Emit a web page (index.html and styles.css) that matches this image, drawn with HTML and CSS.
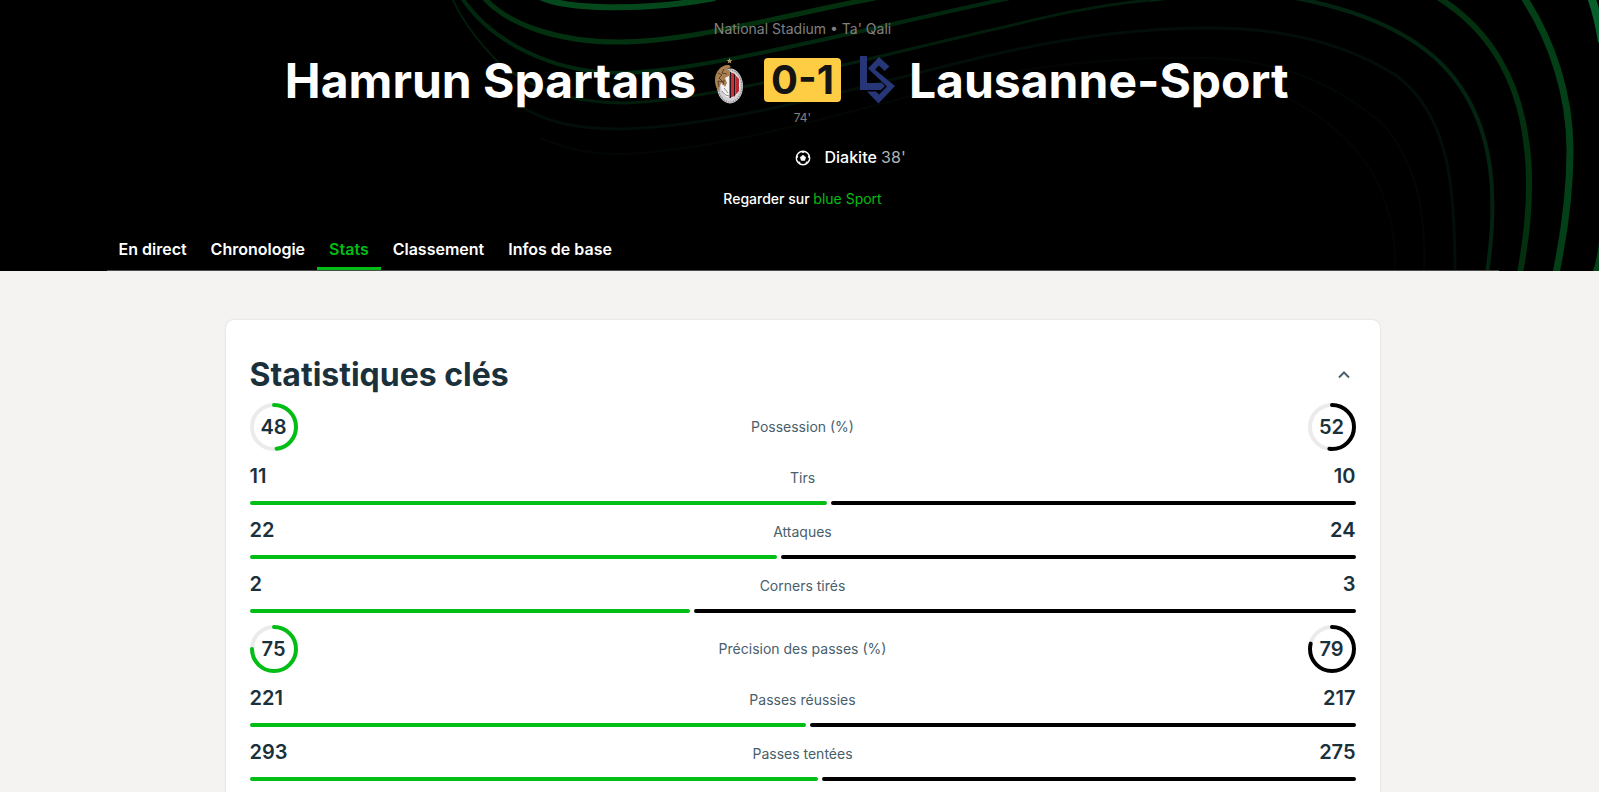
FILE: index.html
```html
<!DOCTYPE html>
<html lang="fr">

<head>
    <meta charset="UTF-8">
    <meta name="viewport" content="width=device-width, initial-scale=1.0">
    <title>Hamrun Spartans - Lausanne-Sport</title>
    <link rel="stylesheet" href="styles.css">
</head>

<body>
    <header class="match-header">
        <!-- Background waves -->
        <svg class="waves" viewBox="0 0 1599 271" preserveAspectRatio="xMidYMin slice" aria-hidden="true">
            <path d="M540 -3C565 9 640 12 715 -2" stroke="#04481c" stroke-width="6" />
            <path d="M484 -2C510 26 560 42 618 42C690 42 780 16 875 -2" stroke="#03310f" stroke-width="5" />
            <path d="M462 -2C490 40 550 73 621 73C700 72 860 30 1010 -2" stroke="#02270f" stroke-width="4" />
            <path d="M452 -2C462 20 478 42 500 64" stroke="#021c0b" stroke-width="2" />
            <path d="M500 64C540 94 580 103 625 103C720 100 900 50 1000 28C1050 16 1090 6 1150 0" stroke="#021d0c" stroke-width="3" />
            <path d="M1150 0C1200 -7 1260 -9 1300 -1C1370 13 1423 38 1454 78C1495 130 1498 200 1487 273" stroke="#032410" stroke-width="4" />
            <path d="M520 106C550 124 580 129 621 129C740 126 900 75 1000 53C1080 35 1150 28 1210 28C1290 28 1350 46 1397 76C1450 116 1455 190 1455 273" stroke="#020e07" stroke-width="3" />
            <path d="M540 138C570 150 590 154 621 154C740 150 900 95 1000 74C1080 60 1150 57 1210 58C1300 62 1350 96 1385 126C1420 170 1426 220 1424 273" stroke="#030704" stroke-width="2" />
            <path d="M1270 90C1350 125 1398 180 1395 273" stroke="#030403" stroke-width="2" />
            <path d="M1439 -2C1490 30 1518 80 1526 140C1532 180 1528 230 1520 273" stroke="#03300f" stroke-width="6" />
            <path d="M1523 -4C1552 40 1570 95 1570 150C1570 190 1565 230 1556 273" stroke="#033f17" stroke-width="7" />
            <path d="M1591 -3Q1598 16 1602 42" stroke="#07602c" stroke-width="8" />
            <path d="M1603 236Q1602 256 1596 273" stroke="#04421a" stroke-width="7" />
        </svg>

        <div class="wrapper">
            <p class="venue">National Stadium • Ta' Qali</p>

            <div class="teams">
                <div class="team home">
                    <span class="team-name">Hamrun Spartans</span>
                    <svg class="team-logo" viewBox="0 0 48 48" aria-hidden="true">
                        <path d="M25.500 2l.8 2h2.100l-1.700 1.300.6 2.100-1.800-1.200-1.800 1.200.6-2.100L22.600 4h2.100z" fill="#c39a68" />
                        <ellipse cx="26" cy="30" rx="13" ry="17.500" fill="#d2d2d5" />
                        <ellipse cx="26" cy="30" rx="11.800" ry="16" fill="none" stroke="#8c8c91" stroke-width="1.200" stroke-dasharray="1.500 1" />
                        <ellipse cx="26.500" cy="29" rx="9.500" ry="13" fill="#f4f4f4" />
                        <path d="M25.500 16h1.500v26h-1.500z" fill="#29171b" />
                        <path d="M27 16.500l3 .7v23l-3 1.300z" fill="#c9303a" />
                        <path d="M30 17.500l1.500 1.500v20l-1.500 2z" fill="#2a1216" />
                        <path d="M31.500 19l3.500 4v12l-3.500 4z" fill="#b92a33" />
                        <path d="M25 9c-7-1-14 6-14 15 0 6 2 10 5 11-1-4 0-7 2-8l3 4 2-4-2-5 4-2 1-5-3-2 4-2z" fill="#a98051" />
                        <path d="M14 17l4 2-3 3 4 4-5-1 1 6M20 13l-2 4 5 1M20 24l-1 5" stroke="#5b4026" stroke-width="1" fill="none" />
                        <path d="M18 35q3 5 7 5M20 32l4 5" stroke="#8c8c91" stroke-width="1" fill="none" />
                    </svg>
                </div>
                <div class="score">0-1</div>
                <div class="team away">
                    <svg class="team-logo" viewBox="0 0 48 48" aria-hidden="true">
                        <path d="M7 0h7v27h15l3 3-4 4H7z" fill="#263676" />
                        <path d="M26 1l10.500 9.500-5 4.500-5.500-5.500-4 4L42 30 25.500 47.500 14 35.500h9l3 3L34 30.500 15 12.500z" fill="#263676" />
                    </svg>
                    <span class="team-name">Lausanne-Sport</span>
                </div>
            </div>
            <p class="minute">74'</p>

            <div class="scorers">
                <svg class="goal-icon" viewBox="0 0 24 24" aria-hidden="true">
                    <circle cx="12" cy="12" r="6.700" fill="none" stroke="#fff" stroke-width="1.400" />
                    <path d="M12 9.200l2.700 2-1 3.200h-3.400l-1-3.200z" fill="#fff" stroke="#fff" stroke-width=".6" stroke-linejoin="round" />
                    <path d="M9.800 5.500h4.400L12 7.200zM18 8.600l.7 4-2-1.300zM6 8.600l-.7 4 2-1.300zM14.600 18l2.600-2.400-2.400.1zM9.400 18l-2.600-2.400 2.400.1z" fill="#fff" />
                </svg>
                <p class="scorer">Diakite <span class="goal-minute">38'</span></p>
            </div>

            <p class="watch">Regarder sur <a href="#">blue Sport</a></p>

            <nav class="tabs">
                <a href="#">En direct</a>
                <a href="#">Chronologie</a>
                <a href="#" class="active">Stats</a>
                <a href="#">Classement</a>
                <a href="#">Infos de base</a>
            </nav>
        </div>
    </header>

    <main class="wrapper">
        <section class="card">
            <div class="card-header">
                <h2>Statistiques clés</h2>
                <button type="button" class="toggle" aria-label="Réduire" aria-expanded="true">
                    <svg viewBox="0 0 24 24">
                        <path d="M7 14.500l5-5 5 5" />
                    </svg>
                </button>
            </div>

            <div class="stat">
                <div class="ring">
                    <svg viewBox="0 0 48 48">
                        <circle cx="24" cy="24" r="22" />
                        <circle class="value" cx="24" cy="24" r="22" pathLength="100" stroke-dasharray="48 100" />
                    </svg>
                    <span>48</span>
                </div>
                <span class="label">Possession (%)</span>
                <div class="ring away">
                    <svg viewBox="0 0 48 48">
                        <circle cx="24" cy="24" r="22" />
                        <circle class="value" cx="24" cy="24" r="22" pathLength="100" stroke-dasharray="52 100" />
                    </svg>
                    <span>52</span>
                </div>
            </div>

            <div class="stat bar-stat">
                <span class="number">11</span>
                <span class="label">Tirs</span>
                <span class="number away">10</span>
                <div class="bars">
                    <div class="bar" style="flex-grow: 11"></div>
                    <div class="bar away" style="flex-grow: 10"></div>
                </div>
            </div>

            <div class="stat bar-stat">
                <span class="number">22</span>
                <span class="label">Attaques</span>
                <span class="number away">24</span>
                <div class="bars">
                    <div class="bar" style="flex-grow: 22"></div>
                    <div class="bar away" style="flex-grow: 24"></div>
                </div>
            </div>

            <div class="stat bar-stat">
                <span class="number">2</span>
                <span class="label">Corners tirés</span>
                <span class="number away">3</span>
                <div class="bars">
                    <div class="bar" style="flex-grow: 2"></div>
                    <div class="bar away" style="flex-grow: 3"></div>
                </div>
            </div>

            <div class="stat">
                <div class="ring">
                    <svg viewBox="0 0 48 48">
                        <circle cx="24" cy="24" r="22" />
                        <circle class="value" cx="24" cy="24" r="22" pathLength="100" stroke-dasharray="75 100" />
                    </svg>
                    <span>75</span>
                </div>
                <span class="label">Précision des passes (%)</span>
                <div class="ring away">
                    <svg viewBox="0 0 48 48">
                        <circle cx="24" cy="24" r="22" />
                        <circle class="value" cx="24" cy="24" r="22" pathLength="100" stroke-dasharray="79 100" />
                    </svg>
                    <span>79</span>
                </div>
            </div>

            <div class="stat bar-stat">
                <span class="number">221</span>
                <span class="label">Passes réussies</span>
                <span class="number away">217</span>
                <div class="bars">
                    <div class="bar" style="flex-grow: 221"></div>
                    <div class="bar away" style="flex-grow: 217"></div>
                </div>
            </div>

            <div class="stat bar-stat">
                <span class="number">293</span>
                <span class="label">Passes tentées</span>
                <span class="number away">275</span>
                <div class="bars">
                    <div class="bar" style="flex-grow: 293"></div>
                    <div class="bar away" style="flex-grow: 275"></div>
                </div>
            </div>
        </section>
    </main>
</body>

</html>
```

FILE: styles.css
```css
* {
    box-sizing: border-box;
}

body {
    margin: 0;
    background-color: #f4f3f1;
    font-family: Inter, "Liberation Sans", sans-serif;
    color: #1a313c;
}

p,
h2 {
    margin: 0;
}

a {
    text-decoration: none;
}

.wrapper {
    padding-left: 6px;
}

/* Header */
.match-header {
    position: relative;
    overflow: hidden;
    background-color: #000;
    color: #fff;
    text-align: center;
}

.match-header .wrapper {
    position: relative;
    padding-top: 19px;
}

.waves {
    position: absolute;
    top: 0;
    left: 0;
    width: 100%;
    height: 100%;
    fill: none;
}

.venue {
    font-size: 14px;
    line-height: 20px;
    color: #808080;
}

.teams {
    display: grid;
    grid-template-columns: 1fr auto 1fr;
    align-items: center;
    gap: 12px;
    margin-top: 16px;
}

.team {
    display: flex;
    align-items: center;
    gap: 8px;
}

.team.home {
    justify-content: flex-end;
}

.team-name {
    padding-top: 2px;
    font-size: 48px;
    line-height: 48px;
    font-weight: 700;
    white-space: nowrap;
}

.team-logo {
    width: 48px;
    height: 48px;
}

.score {
    padding: 0 7px;
    border-radius: 4px;
    background-color: #ffcd44;
    color: #141414;
    font-size: 40px;
    line-height: 44px;
    font-weight: 700;
}

.minute {
    margin-top: 5px;
    font-size: 12px;
    line-height: 16px;
    color: #808080;
}

.scorers {
    display: grid;
    grid-template-columns: 1fr 24px 1fr;
    gap: 10px;
    margin-top: 20px;
}

.goal-icon {
    grid-column: 2;
    width: 24px;
    height: 24px;
}

.scorer {
    text-align: left;
    font-size: 16px;
    line-height: 22px;
    font-weight: 500;
}

.goal-minute {
    color: #b3b3b3;
    font-weight: 400;
}

.watch {
    margin-top: 19px;
    font-size: 14px;
    line-height: 20px;
    font-weight: 500;
}

.watch a {
    color: #00be14;
    font-weight: 400;
}

.tabs {
    display: flex;
    max-width: 1392px;
    margin: 20px auto 0;
    border-bottom: 1px solid #4d4d4d;
}

.tabs a {
    padding: 10px 12px 8px;
    border-bottom: 3px solid transparent;
    color: #fff;
    font-size: 16px;
    line-height: 20px;
    font-weight: 600;
}

.tabs .active {
    border-bottom-color: #00be14;
    color: #00be14;
}

/* Stats card */
.card {
    max-width: 1154px;
    margin: 49px auto 0;
    padding: 39px 24px 24px;
    border-radius: 8px;
    background-color: #fff;
    box-shadow: 0 0 2px rgba(0, 0, 0, 0.15);
}

.card-header {
    display: flex;
    justify-content: space-between;
    align-items: center;
}

.card-header h2 {
    font-size: 32px;
    line-height: 32px;
    font-weight: 700;
}

.toggle {
    width: 24px;
    height: 24px;
    padding: 0;
    border: 0;
    background: none;
    cursor: pointer;
}

.toggle svg {
    display: block;
    fill: none;
    stroke: #4a626d;
    stroke-width: 2;
}

.stat {
    display: grid;
    grid-template-columns: 1fr auto 1fr;
    align-items: center;
    padding-top: 12px;
}

.bar-stat {
    align-items: baseline;
}

.label {
    font-size: 14px;
    line-height: 20px;
    color: #48606b;
}

.number {
    font-size: 20px;
    line-height: 26px;
    font-weight: 600;
}

.number.away {
    text-align: right;
}

.bars {
    grid-column: 1 / -1;
    display: flex;
    gap: 4px;
    margin-top: 12px;
}

.bar {
    flex-basis: 0;
    height: 4px;
    border-radius: 2px;
    background-color: #00be14;
}

.bar.away {
    background-color: #000;
}

.ring {
    display: grid;
    place-items: center;
    width: 48px;
    height: 48px;
    font-size: 20px;
    font-weight: 600;
}

.ring svg,
.ring span {
    grid-area: 1 / 1;
}

.ring svg {
    width: 48px;
    height: 48px;
    transform: rotate(-90deg);
    fill: none;
    stroke: #ebebeb;
    stroke-width: 4;
}

.ring .value {
    stroke: #00be14;
    stroke-linecap: round;
}

.ring.away {
    justify-self: end;
}

.ring.away .value {
    stroke: #000;
}
```
